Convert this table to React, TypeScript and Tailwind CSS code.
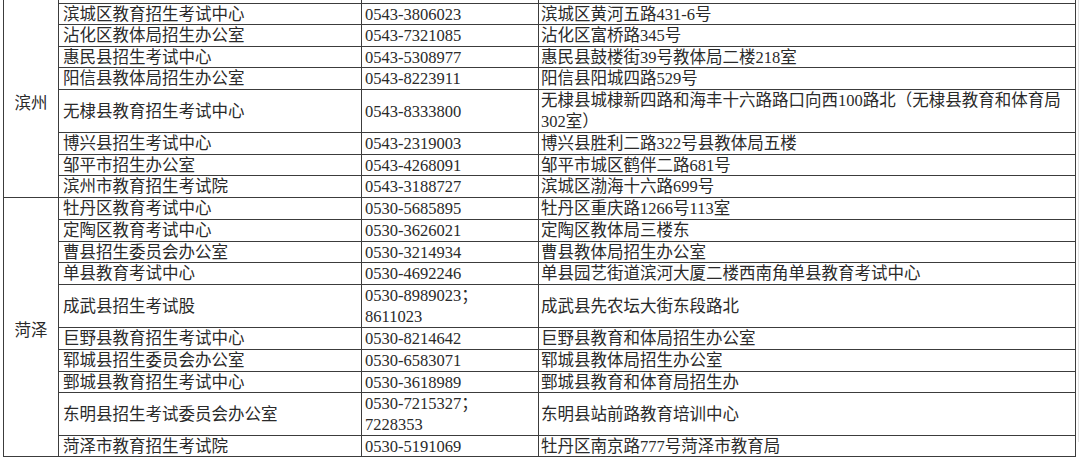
import React from "react";

type Row = {
  name: string;
  phone: React.ReactNode;
  addr: React.ReactNode;
  h: string;
};

const binzhou: Row[] = [
  { name: "滨城区教育招生考试中心", phone: "0543-3806023", addr: "滨城区黄河五路431-6号", h: "h-[20px]" },
  { name: "沾化区教体局招生办公室", phone: "0543-7321085", addr: "沾化区富桥路345号", h: "h-[21px]" },
  { name: "惠民县招生考试中心", phone: "0543-5308977", addr: "惠民县鼓楼街39号教体局二楼218室", h: "h-[20px]" },
  { name: "阳信县教体局招生办公室", phone: "0543-8223911", addr: "阳信县阳城四路529号", h: "h-[21px]" },
  {
    name: "无棣县教育招生考试中心",
    phone: "0543-8333800",
    addr: (
      <>
        无棣县城棣新四路和海丰十六路路口向西100路北（无棣县教育和体育局
        <br />
        302室）
      </>
    ),
    h: "h-[42px]",
  },
  { name: "博兴县招生考试中心", phone: "0543-2319003", addr: "博兴县胜利二路322号县教体局五楼", h: "h-[21px]" },
  { name: "邹平市招生办公室", phone: "0543-4268091", addr: "邹平市城区鹤伴二路681号", h: "h-[20px]" },
  { name: "滨州市教育招生考试院", phone: "0543-3188727", addr: "滨城区渤海十六路699号", h: "h-[21px]" },
];

const heze: Row[] = [
  { name: "牡丹区教育考试中心", phone: "0530-5685895", addr: "牡丹区重庆路1266号113室", h: "h-[21px]" },
  { name: "定陶区教育考试中心", phone: "0530-3626021", addr: "定陶区教体局三楼东", h: "h-[21px]" },
  { name: "曹县招生委员会办公室", phone: "0530-3214934", addr: "曹县教体局招生办公室", h: "h-[20px]" },
  { name: "单县教育考试中心", phone: "0530-4692246", addr: "单县园艺街道滨河大厦二楼西南角单县教育考试中心", h: "h-[21px]" },
  {
    name: "成武县招生考试股",
    phone: (
      <>
        0530-8989023；
        <br />
        8611023
      </>
    ),
    addr: "成武县先农坛大街东段路北",
    h: "h-[42px]",
  },
  { name: "巨野县教育招生考试中心", phone: "0530-8214642", addr: "巨野县教育和体局招生办公室", h: "h-[21px]" },
  { name: "郓城县招生委员会办公室", phone: "0530-6583071", addr: "郓城县教体局招生办公室", h: "h-[21px]" },
  { name: "鄄城县教育招生考试中心", phone: "0530-3618989", addr: "鄄城县教育和体育局招生办", h: "h-[20px]" },
  {
    name: "东明县招生考试委员会办公室",
    phone: (
      <>
        0530-7215327；
        <br />
        7228353
      </>
    ),
    addr: "东明县站前路教育培训中心",
    h: "h-[42px]",
  },
  { name: "菏泽市教育招生考试院", phone: "0530-5191069", addr: "牡丹区南京路777号菏泽市教育局", h: "h-[20px]" },
];

const cell = "border border-[#3c3c3c] p-0 align-middle";

function Box({ h, pl, children }: { h: string; pl: string; children: React.ReactNode }) {
  return (
    <div className={`${h} ${pl} flex items-center overflow-visible`}>
      <div className="leading-[21px]">{children}</div>
    </div>
  );
}

function Group({ city, rows, topOpen }: { city: string; rows: Row[]; topOpen?: boolean }) {
  return (
    <>
      {rows.map((r, i) => (
        <tr key={r.name}>
          {i === 0 && (
            <td
              rowSpan={rows.length}
              className={`${cell} text-center pt-[6px] ${topOpen ? "border-t-0" : ""}`}
            >
              {city}
            </td>
          )}
          <td className={cell}>
            <Box h={r.h} pl="pl-[4px]">{r.name}</Box>
          </td>
          <td className={cell}>
            <Box h={r.h} pl="pl-[3px]">{r.phone}</Box>
          </td>
          <td className={cell}>
            <Box h={r.h} pl="pl-[2px]">{r.addr}</Box>
          </td>
        </tr>
      ))}
    </>
  );
}

export default function App() {
  return (
    <div className="h-[461px] w-[1080px] overflow-hidden bg-white">
      <div className="w-[1079px] h-full border-r border-[#e2e2e2] pl-[3px]">
        <table
          className="table-fixed border-collapse w-[1072px] -mt-[19px] text-[16.5px] leading-[21px] text-[#2a2a2a] whitespace-nowrap"
          style={{ fontFamily: '"Liberation Serif", "Noto Sans CJK SC", serif' }}
        >
          <colgroup>
            <col className="w-[55px]" />
            <col className="w-[303px]" />
            <col className="w-[177px]" />
            <col className="w-[537px]" />
          </colgroup>
          <tbody>
            <tr>
              <td className={`${cell} border-b-0`}></td>
              <td className={cell}>
                <Box h="h-[21px]" pl="pl-[4px]">滨州经济技术开发区招生办</Box>
              </td>
              <td className={cell}>
                <Box h="h-[21px]" pl="pl-[3px]">{""}</Box>
              </td>
              <td className={cell}>
                <Box h="h-[21px]" pl="pl-[2px]">滨州市黄河八路</Box>
              </td>
            </tr>
            <Group city="滨州" rows={binzhou} topOpen />
            <Group city="菏泽" rows={heze} />
          </tbody>
        </table>
      </div>
    </div>
  );
}
